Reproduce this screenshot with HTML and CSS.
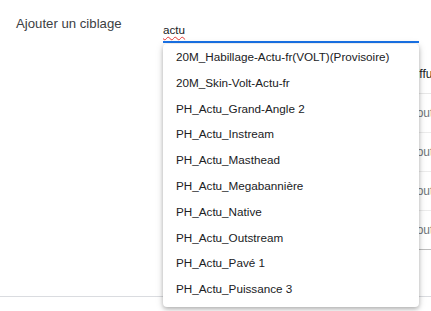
FILE: index.html
```html
<!DOCTYPE html>
<html lang="fr">
<head>
  <meta charset="UTF-8">
  <title>Ajouter un ciblage</title>
  <link rel="stylesheet" href="styles.css">
</head>
<body>

  <div class="panel">
    <div class="row">
      <div class="label">Ajouter un ciblage</div>
      <div class="field">
        <div class="input"><span class="typed">actu</span></div>

        <!-- liste des suggestions, par-dessus le tableau -->
        <ul class="menu">
          <li>20M_Habillage-Actu-fr(VOLT)(Provisoire)</li>
          <li>20M_Skin-Volt-Actu-fr</li>
          <li>PH_Actu_Grand-Angle 2</li>
          <li>PH_Actu_Instream</li>
          <li>PH_Actu_Masthead</li>
          <li>PH_Actu_Megabannière</li>
          <li>PH_Actu_Native</li>
          <li>PH_Actu_Outstream</li>
          <li>PH_Actu_Pavé 1</li>
          <li>PH_Actu_Puissance 3</li>
        </ul>
      </div>
    </div>

    <div class="table">
      <div class="thead">Diffusion</div>
      <div class="trow">Ajouter</div>
      <div class="trow">Ajouter</div>
      <div class="trow">Ajouter</div>
      <div class="trow">Ajouter</div>
    </div>
  </div>

  <div class="footer-line"></div>

</body>
</html>
```

FILE: styles.css
```css
body {
  font-family: "Liberation Sans", Arial, sans-serif;
  background-color: #fff;
  color: #202124;
  margin: 0;
  padding: 0;
  width: 431px;
  height: 311px;
  overflow: hidden;
}

.panel {
  height: 296px;
}

.row {
  display: flex;
  padding-top: 15px;
}

.label {
  width: 147px;
  padding-left: 16px;
  font-size: 13.2px;
  line-height: 18px;
  color: #3c4043;
}

.field {
  position: relative;
  width: 256px;
}

.input {
  height: 26px;
  border-bottom: 2px solid #1a73e8;
  font-size: 11.7px;
  line-height: 30px;
  color: #202124;
}

.typed {
  text-decoration: underline wavy #e53935;
  text-decoration-thickness: 1px;
  text-underline-offset: 2px;
}

.menu {
  position: absolute;
  top: 29px;
  left: 0;
  width: 256px;
  margin: 0;
  padding: 0 0 5px 0;
  list-style: none;
  background: #fff;
  border-radius: 4px;
  box-shadow: 0 2px 4px rgba(0, 0, 0, 0.25), 0 1px 8px rgba(0, 0, 0, 0.12);
  z-index: 2;
}

.menu li {
  height: 25.8px;
  line-height: 26px;
  padding-left: 13px;
  font-size: 11.7px;
  color: #202124;
  white-space: nowrap;
}

.table {
  margin: 14px 0 0 300px;
  border-left: 1px solid #e0e0e0;
  border-bottom: 1px solid #bdbdbd;
  width: 200px;
  overflow: hidden;
}

.thead {
  height: 36px;
  line-height: 34px;
  padding-left: 107px;
  font-size: 12px;
  color: #202124;
  border-bottom: 1px solid #e8e8e8;
  white-space: nowrap;
}

.trow {
  height: 38px;
  line-height: 38px;
  padding-left: 105px;
  font-size: 12px;
  color: #70757a;
  border-bottom: 1px solid #ececec;
  white-space: nowrap;
}

.trow:last-child {
  border-bottom: none;
}

.footer-line {
  border-top: 1px solid #dadce0;
}
```
